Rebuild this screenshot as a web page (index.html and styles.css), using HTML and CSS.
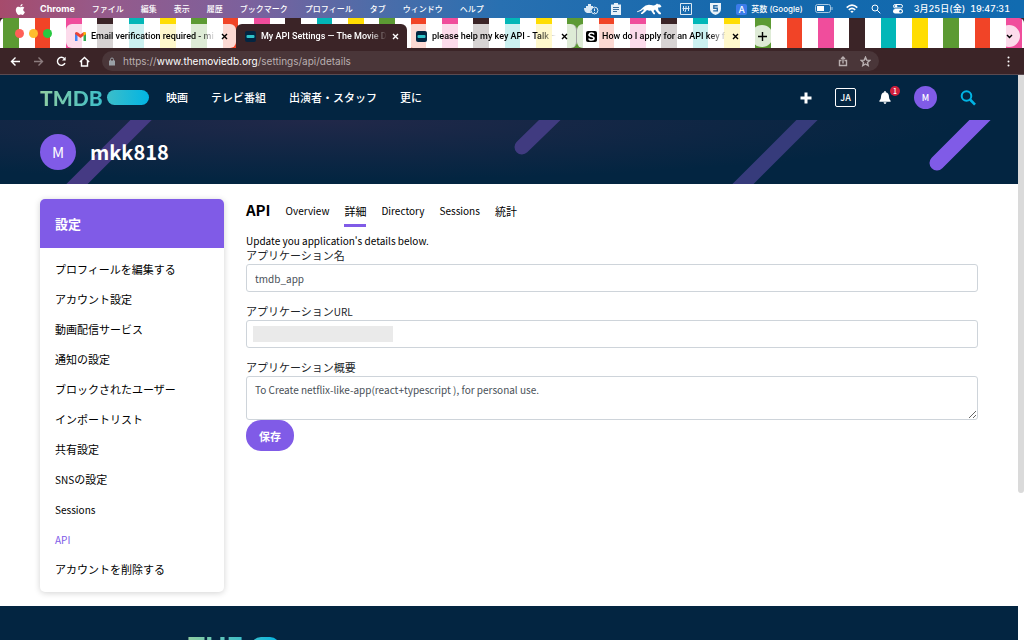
FILE: index.html
```html
<!DOCTYPE html>
<html lang="ja">
<head>
<meta charset="utf-8">
<title>My API Settings — The Movie Database</title>
<link rel="stylesheet" href="styles.css">
</head>
<body>
<div class="menubar">
  <svg class="apple" viewBox="0 0 24 24" width="13" height="13"><path fill="#fff" d="M17 12.600c0-2.500 2-3.700 2.100-3.800-1.200-1.700-3-1.900-3.600-2-1.500-.1-3 .9-3.800.9-.8 0-2-.9-3.300-.9C6.700 6.800 5.100 7.800 4.200 9.300c-1.800 3.100-.5 7.800 1.300 10.300.9 1.200 1.900 2.600 3.300 2.600 1.300-.1 1.800-.9 3.400-.9s2 .9 3.400.8c1.400 0 2.300-1.200 3.100-2.500 1-1.400 1.400-2.800 1.400-2.900 0 0-3.100-1.100-3.100-4.100zM14.700 5.100c.7-.8 1.200-2 1-3.200-1 0-2.200.7-2.900 1.500-.7.700-1.200 1.900-1.100 3 1.200.1 2.300-.5 3-1.300z"/></svg>
  <nav class="menus">
    <b class="app-name">Chrome</b><span>ファイル</span><span>編集</span><span>表示</span><span>履歴</span><span>ブックマーク</span><span>プロフィール</span><span>タブ</span><span>ウィンドウ</span><span>ヘルプ</span>
  </nav>
  <div class="status">
    <svg width="15" height="12" viewBox="0 0 15 12"><path fill="#dbe9f5" d="M0 5h2V3h2V1h3v2h2v2a4 4 0 0 0-2 5H3Q0 9 0 5z"/><circle cx="10.500" cy="7.500" r="3.400" fill="none" stroke="#dbe9f5"/><path stroke="#dbe9f5" d="M10.500 5.500v2.500M10.500 9v1"/></svg>
    <svg class="clip" width="10" height="12" viewBox="0 0 10 12"><path fill="#e5eff8" d="M0 1.500h3V0h4v1.500h3V12H0z"/><path stroke="#3b6f9e" d="M2 4.500h6M2 6.500h6M2 8.500h4"/></svg>
    <svg class="cat" width="26" height="12" viewBox="0 0 26 12"><path fill="#fff" d="M0 8.500Q4 7 6 4.500q3-3.500 8-2.500 3 1 5-.5L20 .5l1 .7 2 .2 1.500 2-1.500 1-2 .2.500 3 2.500 2.500v1.200h-2L19 8l-1-1.500L16.500 8l1.500 2v1.200h-1.500L14 7.500q-2 .5-4-.5L8 9l-2.500 2H4v-1l2.500-2.200L6.500 6Q4 8.500 0 9.300z"/></svg>
    <svg class="box" width="12" height="12" viewBox="0 0 12 12"><path fill="none" stroke="#dce9f4" d="M.5.5h11v11H.5z"/><path fill="none" stroke="#dce9f4" d="M2.500 5.500h7M3.500 3v5M6 3v3L5 9M8.500 3v5"/></svg>
    <svg class="shield" width="11" height="12" viewBox="0 0 11 12"><path fill="#e9f1f8" d="M0 0h11v6q0 4-5.500 6Q0 10 0 6z"/><path fill="none" stroke="#2a6ca5" stroke-width="1.400" d="M7.700 2.800H3.800v2.500h3.500v2.600H3.200"/></svg>
    <span class="ime">A</span><span class="ime-name">英数 (Google)</span>
    <svg class="battery" width="18" height="10" viewBox="0 0 18 10"><rect x=".5" y=".5" width="15" height="8" rx="2" fill="none" stroke="#a8c9e3"/><rect x="2" y="2" width="7" height="5" fill="#fff"/><path stroke="#a8c9e3" d="M17 3v3"/></svg>
    <svg class="wifi" width="12" height="10" viewBox="0 0 12 10"><g fill="none" stroke="#fff" stroke-width="1.600"><path d="M.7 3.700q5.300-5 10.600 0M2.800 5.900q3.200-3 6.400 0"/></g><path fill="#fff" d="M4.300 7.300q1.700-1.300 3.400 0L6 9z"/></svg>
    <svg class="mag" width="10" height="10" viewBox="0 0 10 10"><g fill="none" stroke="#fff"><circle cx="4" cy="4" r="3"/><path d="M6.200 6.200 9.300 9.300"/></g></svg>
    <svg class="control" width="10" height="10" viewBox="0 0 10 10"><rect x=".5" y=".5" width="9" height="3.500" rx="1.700" fill="none" stroke="#fff"/><circle cx="3" cy="2.200" r="1.300" fill="#fff"/><rect y="5" width="10" height="4.500" rx="2.200" fill="#fff"/><circle cx="7.500" cy="7.200" r="1.200" fill="#1669ab"/></svg>
    <span class="clock"><span>3月25日(金)</span><span>19:47:31</span></span>
  </div>
</div>

<div class="tabstrip">
  <div class="lights"><i class="red"></i><i class="amber"></i><i class="green"></i></div>
  <div class="tab">
    <svg width="11" height="9" viewBox="0 0 11 9"><path fill="#4285f4" d="M0 1h2.500v8H0z"/><path fill="#34a853" d="M8.500 1H11v8H8.500z"/><path fill="#ea4335" d="M0 2q0-3 3-1.500L5.500 2.500 8 .5Q11-1 11 2L5.500 6z"/><path fill="#fbbc04" d="M8.500.3Q11-.5 11 2L8.500 4z"/></svg>
    <span class="title">Email verification required - mi</span><button class="x" aria-label="閉じる"><svg width="7" height="7" viewBox="0 0 7 7"><path d="m1 1 5 5m0-5L1 6"/></svg></button>
  </div>
  <div class="tab active">
    <svg width="11" height="11" viewBox="0 0 11 11"><rect width="11" height="11" rx="2" fill="#032541"/><rect x="1.500" y="4" width="8" height="3" rx="1" fill="#2fc3c9"/></svg>
    <span class="title">My API Settings — The Movie D</span><button class="x" aria-label="閉じる"><svg width="7" height="7" viewBox="0 0 7 7"><path d="m1 1 5 5m0-5L1 6"/></svg></button>
  </div>
  <div class="tab third">
    <svg width="11" height="11" viewBox="0 0 11 11"><rect width="11" height="11" rx="2" fill="#032541"/><rect x="1.500" y="4" width="8" height="3" rx="1" fill="#2fc3c9"/></svg>
    <span class="title">please help my key API - Talk –</span><button class="x" aria-label="閉じる"><svg width="7" height="7" viewBox="0 0 7 7"><path d="m1 1 5 5m0-5L1 6"/></svg></button>
  </div>
  <div class="tab">
    <svg width="11" height="11" viewBox="0 0 11 11"><rect width="11" height="11" rx="2"/><path fill="none" stroke="#fff" stroke-width="1.600" d="M8 3.500Q7.500 2 5.500 2T3 3.700q0 1.300 2.500 1.800T8 7.300Q8 9 5.500 9T3 7.500"/></svg>
    <span class="title">How do I apply for an API key f</span><button class="x" aria-label="閉じる"><svg width="7" height="7" viewBox="0 0 7 7"><path d="m1 1 5 5m0-5L1 6"/></svg></button>
  </div>
  <button class="round plus" aria-label="新しいタブ"><svg width="11" height="11" viewBox="0 0 11 11"><path d="M5.500 1v9M1 5.500h9"/></svg></button>
  <button class="round down" aria-label="タブを検索"><svg width="7" height="7" viewBox="0 0 7 7"><path d="m1 2 2.500 2.500L6 2"/></svg></button>
</div>

<div class="toolbar">
  <button aria-label="戻る"><svg width="11" height="11" viewBox="0 0 11 11"><path d="M10 5.500H1.500m4-4-4 4 4 4"/></svg></button>
  <button class="dim" aria-label="進む"><svg width="11" height="11" viewBox="0 0 11 11"><path d="M1 5.500h8.500m-4-4 4 4-4 4"/></svg></button>
  <button aria-label="再読み込み"><svg width="11" height="11" viewBox="0 0 11 11"><path d="M9 7.200a4 4 0 1 1-.6-4.600"/><path d="M9.700.8v3.700H6z" class="solid"/></svg></button>
  <button aria-label="ホーム"><svg width="11" height="11" viewBox="0 0 11 11"><path d="M.8 6 5.500 1.500 10.200 6M2.500 5v5h6V5"/></svg></button>
  <div class="omnibox">
    <svg width="8" height="9" viewBox="0 0 8 9"><rect x="1" y="3.500" width="6" height="5" fill="#9aa0a6"/><path fill="none" stroke="#9aa0a6" d="M2.500 4V2.500a1.500 1.500 0 0 1 3 0V4"/></svg>
    <div class="url" role="textbox" aria-label="アドレス">https://<span class="host">www.themoviedb.org</span>/settings/api/details</div>
    <button class="share" aria-label="共有"><svg width="10" height="11" viewBox="0 0 10 11"><path d="M3.500 4.500h-2v5h7v-5h-2M5 7.500V1M3 3l2-2 2 2"/></svg></button>
    <button class="fav" aria-label="ブックマーク"><svg width="11" height="11" viewBox="0 0 11 11"><path d="m5.500 1.200 1.200 2.900 3.200.3-2.400 2.100.7 3.100-2.700-1.600-2.700 1.600.7-3.100L1.100 4.400l3.200-.3z"/></svg></button>
  </div>
  <button class="kebab" aria-label="メニュー"><svg width="11" height="11" viewBox="0 0 11 11"><g class="solid"><circle cx="5.500" cy="1.500" r="1"/><circle cx="5.500" cy="5.500" r="1"/><circle cx="5.500" cy="9.500" r="1"/></g></svg></button>
</div>

<div class="viewport">
  <div class="page">
    <header class="site">
      <a class="logo" href="#"><span>TMDB</span><i></i></a>
      <nav class="links"><a href="#">映画</a><a href="#">テレビ番組</a><a href="#">出演者・スタッフ</a><a href="#">更に</a></nav>
      <div class="tools">
        <button aria-label="追加"><svg width="12" height="12" viewBox="0 0 12 12"><path stroke="#fff" stroke-width="3" d="M6 .5v11M.5 6h11"/></svg></button>
        <button class="lang">JA</button>
        <button class="bell" aria-label="通知"><svg width="12" height="13" viewBox="0 0 12 13"><path fill="#fff" d="M5.300 0h1.400v1.200Q10 2 10 6q0 2.500 1.600 3.700v1H.4v-1Q2 8.500 2 6q0-4 3.300-4.800zM4.500 11.300h3q-.3 1.600-1.500 1.600t-1.500-1.600z"/></svg><span class="badge">1</span></button>
        <a class="avatar small" href="#">M</a>
        <button aria-label="検索"><svg width="16" height="16" viewBox="0 0 16 16"><g fill="none" stroke="#01b4e4"><circle cx="6.500" cy="6" r="4.800" stroke-width="2"/><path stroke-width="2.600" d="m10 9.500 5 5.200"/></g></svg></button>
      </div>
    </header>

    <section class="banner">
      <svg class="streaks" width="1018" height="64" viewBox="0 0 1018 64"><g stroke-width="15" stroke-linecap="round"><path stroke="#453a83" d="M151-10 67 74"/><path stroke="#403b80" d="m560-10-38 37"/><path stroke="#363b7b" d="M817-10 733 74"/><path stroke="#805be7" d="m990-10-53 53"/></g></svg>
      <span class="avatar">M</span>
      <h2>mkk818</h2>
    </section>

    <main>
      <aside>
        <h3>設定</h3>
        <ul>
          <li><a href="#">プロフィールを編集する</a></li>
          <li><a href="#">アカウント設定</a></li>
          <li><a href="#">動画配信サービス</a></li>
          <li><a href="#">通知の設定</a></li>
          <li><a href="#">ブロックされたユーザー</a></li>
          <li><a href="#">インポートリスト</a></li>
          <li><a href="#">共有設定</a></li>
          <li><a href="#"><span class="latin">SNS</span>の設定</a></li>
          <li><a href="#" class="latin">Sessions</a></li>
          <li><a href="#" class="latin current">API</a></li>
          <li><a href="#">アカウントを削除する</a></li>
        </ul>
      </aside>
      <section class="content">
        <div class="heading">
          <h1>API</h1>
          <nav><a href="#" class="latin">Overview</a><a href="#" class="selected">詳細</a><a href="#" class="latin">Directory</a><a href="#" class="latin">Sessions</a><a href="#">統計</a></nav>
        </div>
        <p class="latin">Update you application's details below.</p>
        <form>
          <label for="name">アプリケーション名</label>
          <input id="name" type="text" value="tmdb_app">
          <label for="url">アプリケーション<span class="latin">URL</span></label>
          <input id="url" class="masked" type="text">
          <label for="summary">アプリケーション概要</label>
          <textarea id="summary">To Create netflix-like-app(react+typescript ), for personal use.</textarea>
          <button class="save" type="button">保存</button>
        </form>
      </section>
    </main>

    <footer><a class="logo" href="#"><span>THE</span><i></i></a></footer>
  </div>
  <div class="scroll"><i></i></div>
</div>
</body>
</html>
```
FILE: styles.css
```css
* { box-sizing: border-box; }
html, body { height: 100%; }
body {
  margin: 0;
  display: flex;
  flex-direction: column;
  overflow: hidden;
  background: #3b2427;
  font-family: "Noto Sans CJK JP", sans-serif;
  font-size: 11px;
  color: #000;
}
a { color: inherit; text-decoration: none; }
button { display: flex; align-items: center; justify-content: center; padding: 0; border: 0; background: none; color: inherit; font: inherit; }
svg { display: block; flex: none; }
h1, h2, h3, p, ul { margin: 0; padding: 0; }

/* system menu bar */
.menubar {
  flex: none;
  height: 18px;
  display: flex;
  align-items: center;
  padding: 0 14px;
  background: linear-gradient(90deg, #a64b6c, #965a8a 100px, #7b619d 250px, #4f6ca8 370px, #2870b1 500px, #1468ac 760px, #116bb0);
  color: #fff;
  font-family: Inter, "Noto Sans CJK JP", sans-serif;
  font-size: 8px;
  line-height: 12px;
  white-space: nowrap;
}
.menus { display: flex; align-items: center; gap: 17px; margin-left: 13px; font-weight: 500; }
.app-name { font-size: 9px; }
.status { display: flex; align-items: center; margin-left: auto; font-weight: 500; }
.clip { margin-left: 12px; }
.cat { margin-left: 16px; }
.box { margin-left: 17px; }
.shield { margin-left: 18px; }
.ime { margin: 0 4px 0 15px; width: 11px; height: 11px; border-radius: 2px; background: #3c7ceb; text-align: center; line-height: 11px; font-size: 9px; }
.battery { margin-left: 12px; }
.wifi { margin-left: 13px; }
.mag { margin-left: 13px; }
.control { margin-left: 12px; }
.clock { display: flex; gap: 5px; margin-left: 11px; font-size: 9px; font-variant-numeric: tabular-nums; }

/* browser tabs */
.tabstrip {
  flex: none;
  position: relative;
  height: 30px;
  display: flex;
  align-items: flex-end;
  padding-right: 4px;
  border-radius: 5px 5px 0 0;
  background: linear-gradient(90deg, #5c9a33 0 16px, #fff 16px 32px, #f14427 32px 47px, #fff 47px 63px, #f04d9c 63px 79px, #fff 79px 94px, #3b2427 94px 110px, #fff 110px 126px, #02b7b8 126px 141px, #fff 141px 157px, #ffdd02 157px 173px, #fff 173px) 3px 0 / 188px 100%;
  font-family: Roboto, sans-serif;
  font-size: 9px;
}
.lights { width: 66px; height: 30px; display: flex; align-items: center; gap: 5px; padding-left: 15px; }
.lights i { width: 9px; height: 9px; border-radius: 50%; }
.red { background: #ff5f57; }
.amber { background: #febc2e; }
.green { background: #28c840; }
.tab {
  width: 170px;
  height: 24px;
  display: flex;
  align-items: center;
  gap: 5px;
  padding: 0 8px 0 9px;
  border-radius: 6px;
  background: rgba(255, 255, 255, .8);
}
.tab.active { width: 171px; border-radius: 6px 6px 0 0; background: #3b2427; color: #fff; }
.tab.third { border-right: 1px solid #a5a5a5; }
.title {
  flex: 1;
  overflow: hidden;
  white-space: nowrap;
  font-weight: 500;
  mask-image: linear-gradient(90deg, #000 85%, transparent);
}
.tabstrip button svg, .toolbar button svg { fill: none; stroke: currentColor; stroke-width: 1.4; }
.round { height: 22px; width: 22px; margin: 0 0 1px 4px; border-radius: 50%; background: rgba(255, 255, 255, .8); }
.down { margin-left: auto; }

/* address row */
.toolbar { flex: none; height: 27px; display: flex; align-items: center; gap: 12px; padding: 0 10px; border-bottom: 1px solid #5a4a50; color: #fff; }
.toolbar .dim { color: #8c7c7e; }
.toolbar .solid { fill: currentColor; stroke: none; }
.omnibox { flex: 0 1 777px; height: 20px; display: flex; align-items: center; padding: 0 8px 0 6px; border-radius: 10px; background: #4a3639; color: #b9afb0; font-family: Inter, sans-serif; font-size: 10px; }
.url { flex: 1; margin-left: 7px; white-space: nowrap; }
.host { color: #fff; }
.fav { margin-left: 12px; }
.kebab { margin-left: auto; }

.viewport { flex: 1; min-height: 0; display: flex; background: #fff; }
.page { flex: 1; min-width: 0; display: flex; flex-direction: column; overflow: hidden; }
.scroll { flex: none; width: 6px; }
.scroll i { display: block; height: 74%; border-radius: 0 0 3px 3px; background: #dadada; }

/* site header */
.site { flex: none; height: 45px; display: flex; align-items: center; padding: 0 42px 0 40px; background: #032541; color: #fff; font-weight: 500; }
.logo { display: flex; align-items: center; gap: 4px; width: 109px; font-family: Lato, sans-serif; font-size: 21px; line-height: 22px; font-weight: 900; }
.logo span { color: transparent; background: linear-gradient(90deg, #90cea1, #3cbec9); background-clip: text; }
.logo i { flex: 1; height: 15px; border-radius: 8px; background: linear-gradient(90deg, #3cbec9, #01b4e4); }
.links { display: flex; gap: 23px; margin: 0 0 2px 17px; white-space: nowrap; }
.tools { display: flex; align-items: center; gap: 23px; margin-left: auto; }
.lang { width: 21px; height: 19px; border: 1px solid #fff; border-radius: 2px; font-size: 9px; }
.bell { position: relative; }
.badge { position: absolute; left: 11px; top: -5px; width: 10px; height: 10px; border-radius: 50%; background: #d01f3c; font-size: 7px; line-height: 10px; text-align: center; }
.avatar { position: relative; width: 36px; height: 36px; border-radius: 50%; background: #805be7; font-size: 15px; line-height: 36px; text-align: center; color: #fff; }
.avatar.small { width: 23px; height: 23px; font-size: 9px; line-height: 23px; }

.banner { flex: none; position: relative; height: 64px; display: flex; align-items: center; gap: 14px; padding: 0 40px; overflow: hidden; color: #fff; background: radial-gradient(ellipse 640px 60px at 320px 0, #212849, #032541) #032541; }
.streaks { position: absolute; left: 0; top: 0; }
.banner h2 { position: relative; font-size: 20px; line-height: 30px; }

main { flex: 1; min-height: 0; display: flex; align-items: flex-start; gap: 22px; padding: 15px 40px 14px; }
aside { flex: 0 0 184px; border-radius: 5px; box-shadow: 0 1px 6px rgba(0, 0, 0, .18); }
aside h3 { height: 49px; padding: 0 15px; border-radius: 5px 5px 0 0; background: #805be7; color: #fff; font-size: 13px; line-height: 49px; font-weight: 700; }
aside ul { padding: 6px 15px 8px; list-style: none; }
aside li { height: 30px; line-height: 30px; }
.latin { font-size: 10px; }
.current { color: #805be7; }

.content { flex: 1; min-width: 0; }
.heading { display: flex; align-items: center; gap: 15px; height: 28px; margin-bottom: 6px; }
h1 { font-size: 15px; line-height: 20px; padding-bottom: 6px; }
.heading nav { display: flex; gap: 15px; line-height: 24px; }
.heading nav a { height: 28px; }
.heading .selected { border-bottom: 3px solid #805be7; }
p { line-height: 15px; }
form { display: flex; flex-direction: column; }
label { line-height: 15px; margin-bottom: 1px; color: #212529; }
input, textarea { width: 100%; border: 1px solid #ced4da; border-radius: 3px; padding: 0 8px; background: #fff; color: #495057; font: 10px "Noto Sans CJK JP", sans-serif; }
input { height: 28px; margin-bottom: 12px; }
.masked { background: linear-gradient(#eaeaea, #eaeaea) 6px center / 140px 16px no-repeat; }
textarea { display: block; height: 44px; padding-top: 5px; resize: vertical; }
.save { width: 48px; height: 31px; border-radius: 15px; background: #805be7; color: #fff; font-weight: 700; }

footer { flex: none; height: 34px; padding: 31px 188px 0; overflow: hidden; background: #032541; }
footer .logo { gap: 8px; width: 92px; font-size: 28px; line-height: 20px; }
footer .logo i { height: 20px; border-radius: 10px; }
```
